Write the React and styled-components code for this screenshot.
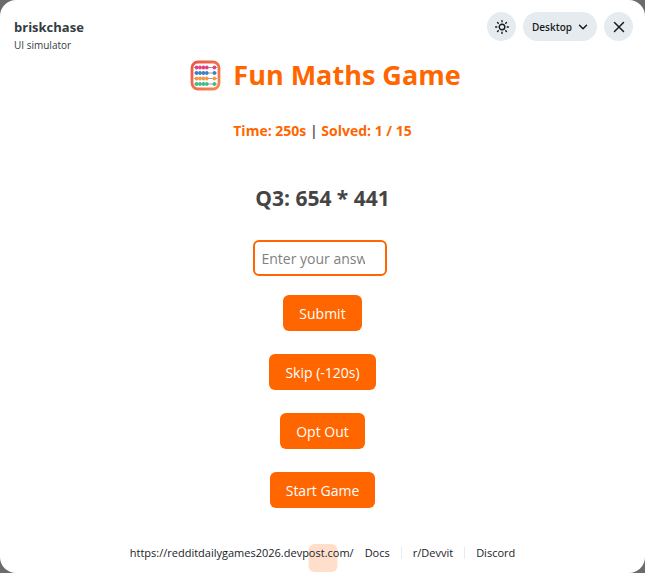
import React, { useState } from 'react'
import styled, { createGlobalStyle } from 'styled-components'

const colors = {
	orange: '#FF6600',
	text: '#444444',
	ink: '#181C1F',
	control: '#E5EBEE',
	backdrop: '#6B6B6B',
	white: '#FFFFFF',
}

const beadRows = [
	{ y: 7.5, color: '#E0407F' },
	{ y: 13, color: '#3B7FC8' },
	{ y: 18.5, color: '#F29A48' },
	{ y: 24, color: '#40BC86' },
]

const beadColumns = [6.6, 10, 13.4, 16.8, 24.4]

export default function App() {
	const [answer, setAnswer] = useState('')

	return (
		<>
			<GlobalStyle />
			<Panel>
				<Header>
					<div>
						<AppName>briskchase</AppName>
						<AppCaption>UI simulator</AppCaption>
					</div>
					<Controls>
						<RoundButton type="button" aria-label="Toggle theme">
							<SunIcon />
						</RoundButton>
						<DeviceButton type="button">
							Desktop
							<ChevronIcon />
						</DeviceButton>
						<RoundButton type="button" aria-label="Close">
							<CloseIcon />
						</RoundButton>
					</Controls>
				</Header>
				<Game>
					<Title>
						<AbacusIcon />
						Fun Maths Game
					</Title>
					<Stats>
						<strong>Time: 250s</strong> | <strong>Solved: 1 / 15</strong>
					</Stats>
					<Question>Q3: 654 * 441</Question>
					<AnswerInput
						type="text"
						aria-label="Your answer"
						placeholder="Enter your answer"
						value={answer}
						onChange={e => setAnswer(e.target.value)}
					/>
					<Actions>
						<ActionButton type="button">Submit</ActionButton>
						<ActionButton type="button">Skip (-120s)</ActionButton>
						<ActionButton type="button">Opt Out</ActionButton>
						<ActionButton type="button">Start Game</ActionButton>
					</Actions>
				</Game>
				<Footer>
					<FadedTile />
					<FooterLink href="https://redditdailygames2026.devpost.com/">
						https://redditdailygames2026.devpost.com/
					</FooterLink>
					<FooterLink href="#docs">Docs</FooterLink>
					<Divider />
					<FooterLink href="#devvit">r/Devvit</FooterLink>
					<Divider />
					<FooterLink href="#discord">Discord</FooterLink>
				</Footer>
			</Panel>
		</>
	)
}

function SunIcon() {
	return (
		<svg width="16" height="16" viewBox="0 0 16 16" fill="none" stroke="currentColor" strokeWidth="1.4">
			<circle cx="8" cy="8" r="2.8" />
			<path
				strokeLinecap="round"
				d="M8 1.6v1.2M8 13.2v1.2M1.6 8h1.2M13.2 8h1.2M3.5 3.5l.8.8M11.7 11.7l.8.8M3.5 12.5l.8-.8M11.7 4.3l.8-.8"
			/>
		</svg>
	)
}

function ChevronIcon() {
	return (
		<svg width="10" height="10" viewBox="0 0 10 10" fill="none" stroke="currentColor" strokeWidth="1.5">
			<path strokeLinecap="round" strokeLinejoin="round" d="M1.5 3.2L5 6.7l3.5-3.5" />
		</svg>
	)
}

function CloseIcon() {
	return (
		<svg width="14" height="14" viewBox="0 0 14 14" fill="none" stroke="currentColor" strokeWidth="1.5">
			<path strokeLinecap="round" d="M2.5 2.5l9 9M11.5 2.5l-9 9" />
		</svg>
	)
}

function AbacusIcon() {
	return (
		<svg width="31" height="31" viewBox="0 0 31 31" aria-hidden="true">
			<defs>
				<linearGradient id="frame" x1="0" y1="0" x2="1" y2="1">
					<stop offset="0" stopColor="#EC5345" />
					<stop offset="1" stopColor="#F58A4E" />
				</linearGradient>
			</defs>
			<rect x="2" y="2" width="27" height="27" rx="6" fill="#FFFFFF" stroke="url(#frame)" strokeWidth="2.8" />
			{beadRows.map(({ y, color }) => (
				<g key={y}>
					<path d={`M4 ${y}h23`} stroke="#8A7F8C" strokeWidth="0.8" />
					{beadColumns.map(x => (
						<ellipse key={x} cx={x} cy={y} rx="1.8" ry="2.1" fill={color} />
					))}
				</g>
			))}
		</svg>
	)
}

const GlobalStyle = createGlobalStyle`
	*, *::before, *::after {
		box-sizing: border-box;
	}

	body {
		margin: 0;
		background: ${colors.backdrop};
		color: ${colors.text};
		font-family: 'Open Sans', 'Noto Sans', sans-serif;
	}

	button, input {
		font-family: inherit;
	}
`

const Panel = styled.div`
	min-height: 100vh;
	display: flex;
	flex-direction: column;
	background: ${colors.white};
	border-radius: 16px;
	overflow: hidden;
`

const Header = styled.header`
	display: flex;
	justify-content: space-between;
	align-items: flex-start;
	padding: 12px 12px 0 14px;
`

const AppName = styled.div`
	padding-top: 5px;
	font-size: 13px;
	font-weight: 700;
	line-height: 20px;
	color: #333D42;
`

const AppCaption = styled.div`
	font-size: 10px;
	line-height: 16px;
	color: #333D42;
`

const Controls = styled.div`
	display: flex;
	gap: 7px;
`

const RoundButton = styled.button`
	display: flex;
	align-items: center;
	justify-content: center;
	width: 29px;
	height: 29px;
	padding: 0;
	border: 0;
	border-radius: 50%;
	background: ${colors.control};
	color: ${colors.ink};
`

const DeviceButton = styled.button`
	display: flex;
	align-items: center;
	gap: 6px;
	height: 29px;
	padding: 0 9px;
	border: 0;
	border-radius: 15px;
	background: ${colors.control};
	color: ${colors.ink};
	font-size: 10px;
	font-weight: 600;
`

const Game = styled.main`
	display: flex;
	flex-direction: column;
	align-items: center;
`

const Title = styled.h1`
	display: flex;
	align-items: center;
	gap: 12px;
	margin: 2px 0 24px;
	padding-left: 6px;
	font-size: 27px;
	font-weight: 700;
	line-height: 40px;
	color: ${colors.orange};
`

const Stats = styled.p`
	margin: 0 0 39px;
	font-size: 14px;
	font-weight: 600;
	line-height: 24px;

	strong {
		font-weight: 700;
		color: ${colors.orange};
	}
`

const Question = styled.h2`
	margin: 0 0 26px;
	font-size: 21px;
	font-weight: 700;
	line-height: 32px;
`

const AnswerInput = styled.input`
	width: 134px;
	height: 36px;
	margin-right: 6px;
	padding: 0 20px 0 7px;
	border: 2px solid ${colors.orange};
	border-radius: 6px;
	background: ${colors.white};
	color: ${colors.text};
	font-size: 14px;
	outline: none;

	&::placeholder {
		color: #808080;
	}
`

const Actions = styled.div`
	display: flex;
	flex-direction: column;
	align-items: center;
	gap: 23px;
	margin-top: 19px;
`

const ActionButton = styled.button`
	height: 36px;
	padding: 0 16px;
	border: 0;
	border-radius: 6px;
	background: ${colors.orange};
	color: ${colors.white};
	font-size: 14px;
`

const Footer = styled.footer`
	position: relative;
	display: flex;
	align-items: center;
	justify-content: center;
	gap: 11px;
	margin-top: auto;
	padding: 24px 0 10px;
	font-size: 11px;
	line-height: 20px;
`

const FooterLink = styled.a`
	position: relative;
	color: ${colors.ink};
	text-decoration: none;
`

const Divider = styled.span`
	width: 1px;
	height: 12px;
	background: #E5EBEE;
`

// sits behind the first link
const FadedTile = styled.span`
	position: absolute;
	bottom: 1px;
	left: 50%;
	width: 29px;
	height: 28px;
	transform: translateX(-50%);
	border-radius: 6px;
	background: #FFDFCC;
`
